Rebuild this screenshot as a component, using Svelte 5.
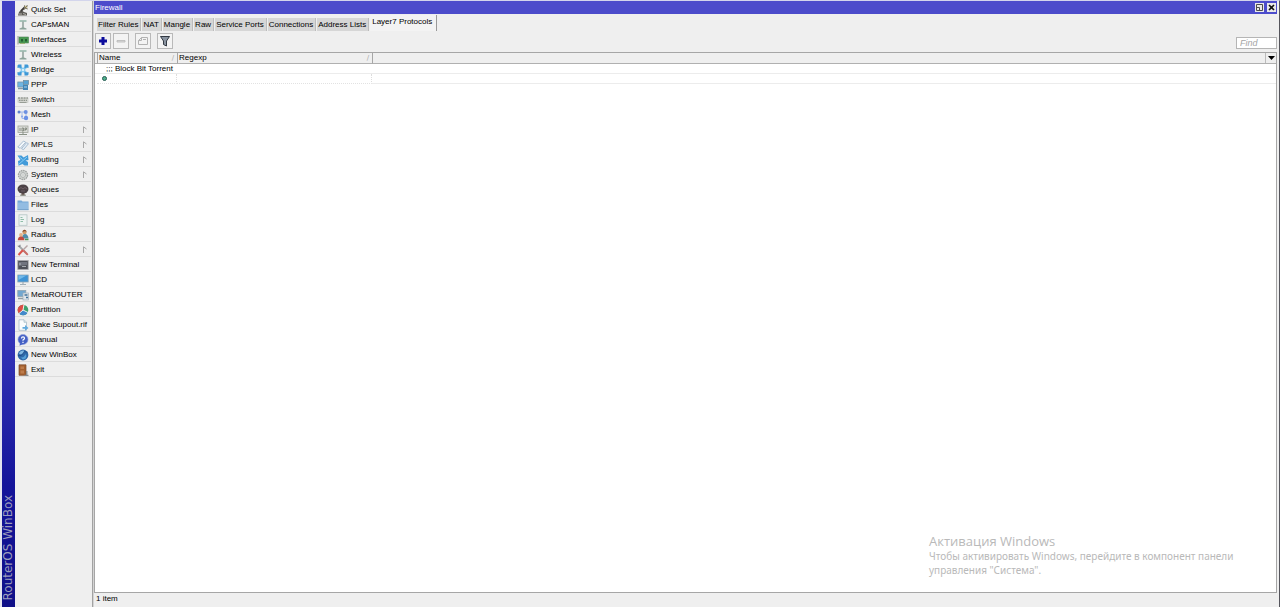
<script>
  const menu = [
    { label: 'Quick Set', icon: 'wand' },
    { label: 'CAPsMAN', icon: 'antenna' },
    { label: 'Interfaces', icon: 'card' },
    { label: 'Wireless', icon: 'antenna' },
    { label: 'Bridge', icon: 'bridge' },
    { label: 'PPP', icon: 'ppp' },
    { label: 'Switch', icon: 'switch' },
    { label: 'Mesh', icon: 'mesh' },
    { label: 'IP', icon: 'ip', sub: true },
    { label: 'MPLS', icon: 'mpls', sub: true },
    { label: 'Routing', icon: 'routing', sub: true },
    { label: 'System', icon: 'gear', sub: true },
    { label: 'Queues', icon: 'tree' },
    { label: 'Files', icon: 'folder' },
    { label: 'Log', icon: 'log' },
    { label: 'Radius', icon: 'users' },
    { label: 'Tools', icon: 'tools', sub: true },
    { label: 'New Terminal', icon: 'terminal' },
    { label: 'LCD', icon: 'lcd' },
    { label: 'MetaROUTER', icon: 'meta' },
    { label: 'Partition', icon: 'pie' },
    { label: 'Make Supout.rif', icon: 'supout' },
    { label: 'Manual', icon: 'help' },
    { label: 'New WinBox', icon: 'globe' },
    { label: 'Exit', icon: 'door' }
  ];
  const tabs = ['Filter Rules', 'NAT', 'Mangle', 'Raw', 'Service Ports', 'Connections', 'Address Lists', 'Layer7 Protocols'];
  let active = $state('Layer7 Protocols');
  let query = $state('');
</script>

{#snippet glyph(name)}
  <svg class="icon" viewBox="0 0 12 12" aria-hidden="true">
    {#if name === 'wand'}
      <path d="M1 11.500 2 8l2-2 3 2 3 1v2.500z" fill="#5c5a55" />
      <path d="M4 7 8 3" stroke="#3c3a38" stroke-width="1.800" />
      <path d="M7 1l1.500 1L11 1l-1 2.500 1 2-2.500-.8L7 6z" fill="#7d7968" />
      <path d="M8 2l2 2" stroke="#d4c787" />
      <path d="M2 10h3M6 9.500l3 1" stroke="#b4b2ac" />
    {:else if name === 'antenna'}
      <path d="M2.500 2h7" stroke="#96b8ab" stroke-width="1.600" />
      <path d="M6 2.500v6.500" stroke="#93a39d" stroke-width="1.600" />
      <path d="M2.500 10.500v-1L5 8.500h2l2.500 1v1z" fill="#8da39a" />
    {:else if name === 'card'}
      <path d="M1 2v8.500" stroke="#999" />
      <rect x="2" y="3" width="9.500" height="6" fill="#489a52" stroke="#4d8256" stroke-width=".6" />
      <path d="M4 5h2v2.500H4zM8 5h2v2.500H8z" fill="#245c33" />
      <path d="M3 9.500h5" stroke="#9cb277" />
    {:else if name === 'bridge'}
      <path d="M2.500 2.500l7 7M9.500 2.500l-7 7" stroke="#86caf0" stroke-width="2.500" />
      <path d="M.5 1.500l1-1h3v4l-2-1-2 .5zM11.500 1.500l-1-1h-3v4l2-1 2 .5zM.5 10.500l1 1h3v-4l-2 1-2-.5zM11.500 10.500l-1 1h-3v-4l2 1 2-.5z" fill="#3f98d6" />
      <circle cx="6" cy="6" r="1" fill="#eefaff" />
    {:else if name === 'ppp'}
      <rect x=".8" y="3" width="6" height="5" fill="#6eb5e2" stroke="#7596ab" stroke-width=".8" />
      <rect x="6.500" y="1.500" width="5" height="4" fill="#57a3d4" stroke="#6f8fa3" stroke-width=".8" />
      <rect x="6" y="6" width="5" height="5" fill="#4285b5" />
      <path d="M1 9.500h5" stroke="#8199a8" stroke-width="1.500" />
      <path d="M7 8h3" stroke="#a4d5f2" />
    {:else if name === 'switch'}
      <rect x=".5" y="3.500" width="11" height="5.500" rx="1" fill="#d2d4cf" />
      <path d="M1 4h10" stroke="#777c75" stroke-dasharray="2 .8" />
      <path d="M2 6.300h8" stroke="#7e847b" stroke-dasharray="1.500 .8" />
      <path d="M2.500 8.500h7" stroke="#979d95" />
    {:else if name === 'mesh'}
      <path d="M2.500 3h6.500v6.500M5 3v6.500h4" stroke="#a5bcea" fill="none" />
      <circle cx="2" cy="3" r="1.500" fill="#6080cd" />
      <circle cx="8.700" cy="3" r="2" fill="#6d91e1" />
      <circle cx="9" cy="9" r="2.200" fill="#6a90e6" />
      <circle cx="5" cy="7.500" r="1" fill="#88a7e9" />
    {:else if name === 'ip'}
      <rect x="1" y="2" width="10" height="6.500" fill="#dadcd7" stroke="#a2a69d" stroke-width=".8" />
      <path d="M3 4v3M5 4h1.500v3H5zM8 7V4h1.500v1.500H8" stroke="#787f74" stroke-width=".8" fill="none" />
      <path d="M2 10.500h8M6 8v2" stroke="#8a9286" />
    {:else if name === 'mpls'}
      <path d="M.8 8 6.500 2l2.200 1.200L3.200 9.300z" fill="#f4f8fb" stroke="#98b1c9" stroke-width=".8" />
      <path d="M4.500 9.700 9.500 3.700l2 1L6.500 10.700z" fill="#e3edf6" stroke="#98b1c9" stroke-width=".8" />
    {:else if name === 'routing'}
      <path d="M.5 1.500h4l2 2 4.500-2.500.5 5-3 .5 2.500 1.500v3.500H7.500l-2-1.500-4 1.700L1 7l2.500-1z" fill="#439bd9" />
      <path d="M1.500 10.500 10 3M2.500 3l3 2.500" stroke="#8bd0f6" stroke-width="1" />
    {:else if name === 'gear'}
      <circle cx="6" cy="6" r="4.500" fill="#dadddb" stroke="#a0a5a3" stroke-width="1.400" stroke-dasharray="1.700 .6" />
      <circle cx="6" cy="6" r="2.500" fill="#edefee" stroke="#9ba19f" stroke-width=".8" />
      <path d="M2 6h8M6 2v8" stroke="#b8bcba" stroke-width=".6" />
    {:else if name === 'tree'}
      <path d="M5 7h2l.8 4.500H4.200z" fill="#69544d" />
      <ellipse cx="6" cy="5" rx="5.500" ry="4.500" fill="#4c4246" />
      <path d="M2 5q2-3 4 0 2-3 4 0M4 7h4" stroke="#77686f" fill="none" stroke-width=".8" />
      <path d="M3 11.200h6" stroke="#8b9187" />
    {:else if name === 'folder'}
      <path d="M.5 1.500h4l1 1h6v8.500H.5z" fill="#77a8d6" />
      <path d="M1 3.500h10v6.800H1z" fill="#93bce2" />
      <path d="M.5 10.700h11" stroke="#79a3cb" />
    {:else if name === 'log'}
      <rect x="2" y=".8" width="8" height="10.500" fill="#edf3f2" stroke="#b4c3c4" stroke-width=".8" />
      <path d="M3.500 3.500h2M3.500 5.500h3.500M3.500 7.500h2.500" stroke="#8fbda8" />
    {:else if name === 'users'}
      <circle cx="7.500" cy="3" r="2.200" fill="#cf9a68" />
      <path d="M5.300 3Q7.500-1.500 9.700 3L8 2z" fill="#80492c" />
      <path d="M5 9.500q0-4.500 3-4.500t3.500 4.500z" fill="#4f8fac" />
      <circle cx="4" cy="6" r="1.900" fill="#e4b38a" />
      <path d="M.8 11.300q0-3.800 3.200-3.800t3.500 3.800z" fill="#c24a40" />
      <path d="M8 10.500h3.500" stroke="#4c9654" stroke-width="1.500" />
    {:else if name === 'tools'}
      <path d="M2 2l8 8" stroke="#a2a6a9" stroke-width="1.800" />
      <path d="M.8 2l2 .5.300-1.700" stroke="#787d82" fill="none" />
      <path d="M10.500 1.500 6 6" stroke="#b6a4a5" stroke-width="1.500" />
      <path d="M6 6l-4.500 5" stroke="#d9544b" stroke-width="2" />
      <path d="M6.500 6.500l4.300 4.300" stroke="#cd6c65" stroke-width="1.800" />
    {:else if name === 'terminal'}
      <rect x=".8" y="1.500" width="10.400" height="9" fill="#4e5058" stroke="#aaaaaf" stroke-width=".8" />
      <path d="M2 3h8v3L2 7z" fill="#71747f" />
      <path d="M2.500 4l1 1-1 1M5 7.500h4" stroke="#cfd3da" stroke-width=".7" fill="none" />
    {:else if name === 'lcd'}
      <rect x=".8" y="1" width="10.400" height="7" fill="#3d93d5" stroke="#91a7b7" stroke-width=".8" />
      <path d="M1.500 1.500h8L1.500 6z" fill="#72b9e9" />
      <path d="M6 8v2M3 10.500h6" stroke="#a2afb7" stroke-width="1.200" />
    {:else if name === 'meta'}
      <rect x=".8" y="1.500" width="8" height="6" fill="#71a7d0" stroke="#8fa3af" stroke-width=".8" />
      <path d="M1 9.500h6" stroke="#909ca3" stroke-width="1.500" />
      <rect x="6" y="4" width="5.500" height="7" fill="#dde4e9" stroke="#9faeb9" stroke-width=".7" />
      <path d="M7.500 6h3M9 8.500h2" stroke="#40729b" stroke-width="1.300" />
    {:else if name === 'pie'}
      <circle cx="6" cy="6" r="5.300" fill="#3da06c" />
      <path d="M6 6 2 9.500A5.300 5.300 0 0 1 7 .8z" fill="#db4d46" />
      <path d="M6 6l4.700 2.400A5.300 5.300 0 0 1 2 9.500z" fill="#4389cc" />
      <path d="M7 .7 6 6l5 2.500M6 6l-4 3.500" stroke="#fff" stroke-width=".9" fill="none" />
    {:else if name === 'supout'}
      <path d="M2 .8h5l2.500 2.500v8H2z" fill="#fafcfd" stroke="#a7bac8" stroke-width=".8" />
      <path d="M7 .8v2.500h2.500" fill="#dce8ee" stroke="#99b0bc" stroke-width=".6" />
      <path d="M5.500 8H8V6l3.500 3L8 11.700v-2H5.500z" fill="#62aadd" />
    {:else if name === 'help'}
      <circle cx="6" cy="5.500" r="5" fill="#4460c4" stroke="#8b9bdd" stroke-width=".6" />
      <path d="M4.500 4.500Q4.500 2.800 6 2.800t1.500 1.500Q7.500 5.200 6 6v.7M6 7.700v1.200" stroke="#fff" fill="none" stroke-width="1.200" />
      <path d="M3 9l-.5 2.700L6 10z" fill="#4460c4" />
    {:else if name === 'globe'}
      <circle cx="6" cy="6" r="5.400" fill="#2f68a8" />
      <path d="M1.800 4.500q1.700-3.500 5.200-3L6.500 4 4 5.500z" fill="#83b9e2" />
      <path d="M3 8q3 2 6-3 1.500 5-3 5.500z" fill="#549fd6" />
      <path d="M1 6.500q4 1 5-2t4.500-1" stroke="#1d4a82" fill="none" stroke-width=".8" />
    {:else if name === 'door'}
      <path d="M2 .8h7v10.500H2z" fill="#a3602f" stroke="#7c4c2c" stroke-width=".7" />
      <path d="M3.500 2.500H7V5H3.500zM3.500 6.500H7v3H3.500z" fill="#bd7c4c" />
      <path d="M7.500 11.300h4M9.800 7v4" stroke="#858b90" stroke-width="1.200" />
    {/if}
  </svg>
{/snippet}

<div class="app">
  <div class="brand"><span>RouterOS WinBox</span></div>
  <nav class="menu" aria-label="Main menu">
    {#each menu as item}
      <button class="item">
        {@render glyph(item.icon)}
        <span>{item.label}</span>
        {#if item.sub}
          <svg class="arrow" viewBox="0 0 5 8" aria-hidden="true"><path d="M1.500 7V.8L4.500 3" fill="none" stroke="#a8a8a8" /></svg>
        {/if}
      </button>
    {/each}
  </nav>
  <main class="window">
    <header class="title">
      <span>Firewall</span>
      <button class="ctl" aria-label="Restore">
        <svg viewBox="0 0 9 9"><path d="M1.500 1.500h6v6h-6zM1.500 4.500h3v3" fill="none" stroke="#4d4d4d" /></svg>
      </button>
      <button class="ctl" aria-label="Close">
        <svg viewBox="0 0 9 9"><path d="M2 2l5 5M7 2 2 7" stroke="#111" stroke-width="1.600" /></svg>
      </button>
    </header>
    <div class="tabs" role="tablist">
      {#each tabs as tab}
        <button role="tab" class="tab" class:active={tab === active} aria-selected={tab === active} onclick={() => (active = tab)}>{tab}</button>
      {/each}
    </div>
    <div class="toolbar">
      <button class="tool" aria-label="Add"><svg viewBox="0 0 14 14"><path d="M7 3v8M3 7h8" stroke="#0c0c9c" stroke-width="3" /></svg></button>
      <button class="tool" aria-label="Remove"><svg viewBox="0 0 14 14"><path d="M3 6.500h8v1.500H3z" fill="#ddd" stroke="#b5b5b5" stroke-width=".8" /></svg></button>
      <button class="tool apart" aria-label="Comment"><svg viewBox="0 0 14 14"><path d="M5.500 3.500h6v7h-9v-4zM5.500 3.500v3h-3M7 5.500h3" fill="none" stroke="#b2b2b2" /></svg></button>
      <button class="tool apart" aria-label="Filter"><svg viewBox="0 0 14 14"><path d="M2.500 2.500h9L8.500 7v5l-3-1.500V7z" fill="#8993a0" stroke="#333a44" /></svg></button>
      <input class="find" placeholder="Find" aria-label="Find" bind:value={query} />
    </div>
    <div class="list">
      <table>
        <colgroup><col class="c-gut" /><col class="c-name" /><col class="c-reg" /><col /><col class="c-drop" /></colgroup>
        <thead>
          <tr>
            <td></td>
            <th><div>Name<i>∕</i></div></th>
            <th><div>Regexp<i>∕</i></div></th>
            <td></td>
            <td class="drop"><button aria-label="Columns"><svg viewBox="0 0 7 4"><path d="M0 0h7L3.500 4z" fill="#000" /></svg></button></td>
          </tr>
        </thead>
        <tbody>
          <tr class="comment"><td></td><td colspan="4">;;; Block Bit Torrent</td></tr>
          <tr class="rule"><td></td><td><span class="dot"></span></td><td></td><td class="line" colspan="2"></td></tr>
        </tbody>
      </table>
      <aside class="notice">
        <h2>Активация Windows</h2>
        <p>Чтобы активировать Windows, перейдите в компонент панели управления "Система".</p>
      </aside>
    </div>
    <footer>1 item</footer>
  </main>
</div>

<style>
  :global(body) { margin: 0; background: #efefef; }
  * { box-sizing: border-box; }
  .app {
    display: flex;
    height: 100vh;
    border-top: 1px solid #d3d5ec;
    border-left: 2px solid #e3e3ee;
    border-right: 1px solid #55555c;
    background: #efefef;
    color: #000;
    font: 8px/12px "Liberation Sans", Arial, sans-serif;
  }
  button { font: inherit; color: inherit; margin: 0; padding: 0; border: 0; background: none; }
  svg { display: block; }
  .brand {
    flex: 0 0 13px;
    display: flex;
    align-items: flex-end;
    justify-content: center;
    padding-bottom: 7px;
    background: linear-gradient(#4040c4 0%, #3c3cbe 50%, #14149a 80%, #101088 100%);
    color: #9c9cbc;
    font: 12px/13px "DejaVu Sans", sans-serif;
  }
  .brand span { writing-mode: vertical-rl; transform: rotate(180deg); white-space: nowrap; }
  .menu { flex: 0 0 78px; padding-top: 1px; border-right: 1px solid #a2a2a2; }
  .item {
    display: flex;
    align-items: center;
    gap: 2px;
    width: 76px;
    height: 15px;
    padding: 1px 4px 0 2px;
    border-bottom: 1px solid #dcdcdc;
    white-space: nowrap;
  }
  .icon { flex: none; width: 12px; height: 12px; }
  .arrow { width: 5px; height: 8px; margin-left: auto; }
  .window { flex: 1; min-width: 0; display: flex; flex-direction: column; border-left: 1px solid #d4d4d4; padding-right: 2px; }
  .title { display: flex; align-items: center; gap: 3px; height: 13px; padding: 0 1px; background: #4c4ccb; color: #fff; }
  .title span { flex: 1; }
  .ctl { width: 9px; height: 9px; background: #e9e9e9; }
  .tabs { display: flex; align-items: flex-end; gap: 1px; height: 17px; padding-left: 3px; }
  .tab { height: 13px; padding: 0 2px 0 1px; background: #d6d6d6; border-right: 1px solid #bcbcbc; white-space: nowrap; }
  .tab.active { height: 16px; padding: 0 4px 2px 2px; background: #f3f3f3; border-right-color: #999; }
  .toolbar { display: flex; align-items: center; gap: 2px; height: 20px; margin-bottom: 1px; padding-left: 1px; }
  .tool { display: grid; place-items: center; width: 16px; height: 16px; border: 1px solid #b9b9b9; background: #f3f3f3; }
  .tool svg { width: 14px; height: 14px; }
  .apart { margin-left: 4px; }
  .find { width: 41px; height: 12px; margin: 4px 0 0 auto; padding: 0 3px; border: 1px solid #b5b5b5; border-radius: 0; background: #fff; font: italic 9px/10px "Liberation Sans", sans-serif; outline: 0; }
  .find::placeholder { color: #a5a5a5; opacity: 1; }
  .list { flex: 1; min-height: 0; display: flex; flex-direction: column; justify-content: space-between; border: 1px solid #a6a6a6; background: #fff; }
  table { width: 100%; table-layout: fixed; border-collapse: separate; border-spacing: 0; }
  th, td { padding: 0; text-align: left; font-weight: 400; }
  .c-gut { width: 2px; }
  .c-name { width: 80px; }
  .c-reg { width: 195px; }
  .c-drop { width: 11px; }
  thead th, thead td { height: 11px; background: #efefef; border-bottom: 1px solid #b0b0b0; line-height: 10px; }
  thead th { border-left: 1px solid #a6a6a6; padding: 0 3px 0 1px; }
  thead th + td { border-left: 1px solid #a6a6a6; }
  th div { display: flex; justify-content: space-between; }
  th i { color: #aaa; font: 7px/10px "DejaVu Sans", sans-serif; }
  .drop button { display: grid; place-items: center; width: 11px; height: 10px; border-left: 1px solid #bbb; }
  .drop svg { width: 7px; height: 4px; }
  tbody td { height: 10px; line-height: 9px; }
  .comment td { border-bottom: 1px solid #ececec; }
  .comment td + td { padding-left: 9px; }
  .rule td + td { border-bottom: 1px dotted #e2e2e2; border-right: 1px dotted #ddd; }
  .rule td.line { border-bottom: 1px solid #ececec; border-right: 0; }
  .dot { display: block; width: 5px; height: 5px; margin-left: 5px; border-radius: 50%; border: 1px solid #245a50; background: #50b08c; }
  .notice { align-self: flex-end; width: 347px; padding: 0 36px 15px 0; color: #b9b9b9; font: 10px/14px "Noto Sans", "Open Sans", sans-serif; }
  .notice h2 { margin: 0; font: 13px/16px "Open Sans", sans-serif; }
  .notice p { margin: 0; }
  footer { height: 14px; padding: 0 2px; }
</style>
